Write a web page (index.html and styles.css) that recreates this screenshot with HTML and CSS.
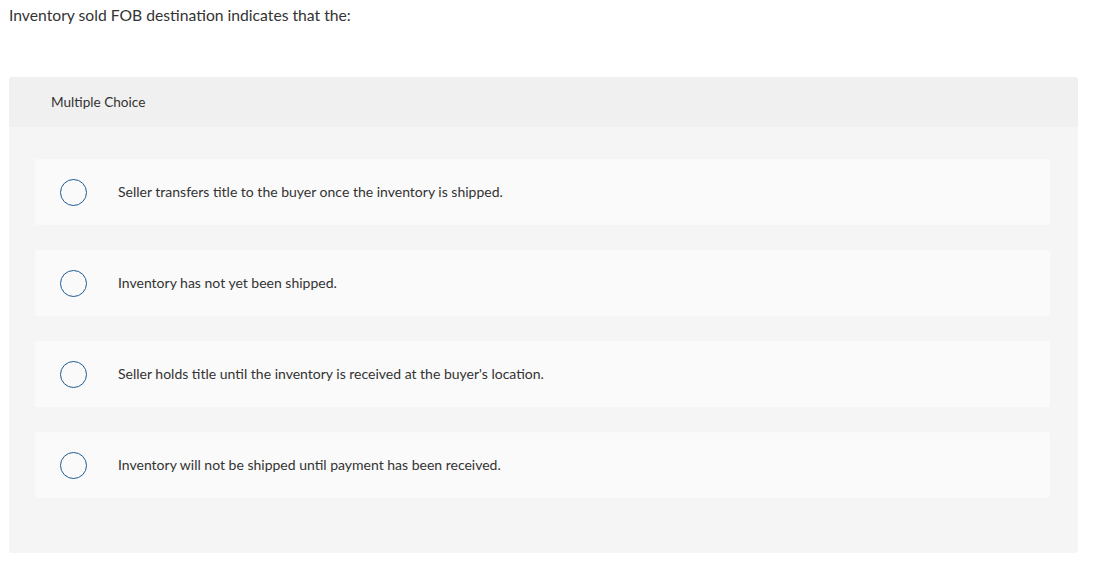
FILE: index.html
```html
<!DOCTYPE html>
<html>
<head>
<meta charset="utf-8">
<link rel="stylesheet" href="styles.css">
</head>
<body>
<div class="page">
  <p class="question">Inventory sold FOB destination indicates that the:</p>
  <div class="mc">
    <div class="mc-header">Multiple Choice</div>
    <div class="mc-options">
      <div class="option"><span class="radio"></span><span class="label">Seller transfers title to the buyer once the inventory is shipped.</span></div>
      <div class="option"><span class="radio"></span><span class="label">Inventory has not yet been shipped.</span></div>
      <div class="option"><span class="radio"></span><span class="label">Seller holds title until the inventory is received at the buyer's location.</span></div>
      <div class="option"><span class="radio"></span><span class="label">Inventory will not be shipped until payment has been received.</span></div>
    </div>
  </div>
</div>
</body>
</html>
```

FILE: styles.css
```css
html, body {
  margin: 0;
  padding: 0;
  background: #ffffff;
}
.page {
  padding: 0 20px 0 9px;
  font-family: Lato, "Liberation Sans", sans-serif;
  color: #333333;
}
.question {
  margin: 0;
  padding-top: 5px;
  font-size: 15.7px;
  line-height: 20px;
  height: 72px;
}
.mc {
  background: #f5f5f5;
  border-radius: 3px;
  width: 1069px;
}
.mc-header {
  background: #f0f0f0;
  height: 50px;
  box-sizing: border-box;
  padding: 17px 0 0 42px;
  font-size: 13.6px;
  line-height: 16px;
  border-radius: 3px 3px 0 0;
}
.mc-options {
  padding: 32px 28px 55px 26px;
  display: flex;
  flex-direction: column;
  gap: 25px;
}
.option {
  background: #fafafa;
  border-radius: 3px;
  height: 66px;
  display: flex;
  align-items: center;
  padding-left: 25px;
}
.radio {
  width: 25px;
  height: 25px;
  border: 1.5px solid #1d5b94;
  border-radius: 50%;
  flex: none;
}
.label {
  margin-left: 31px;
  font-size: 14px;
  line-height: 16px;
}
```
